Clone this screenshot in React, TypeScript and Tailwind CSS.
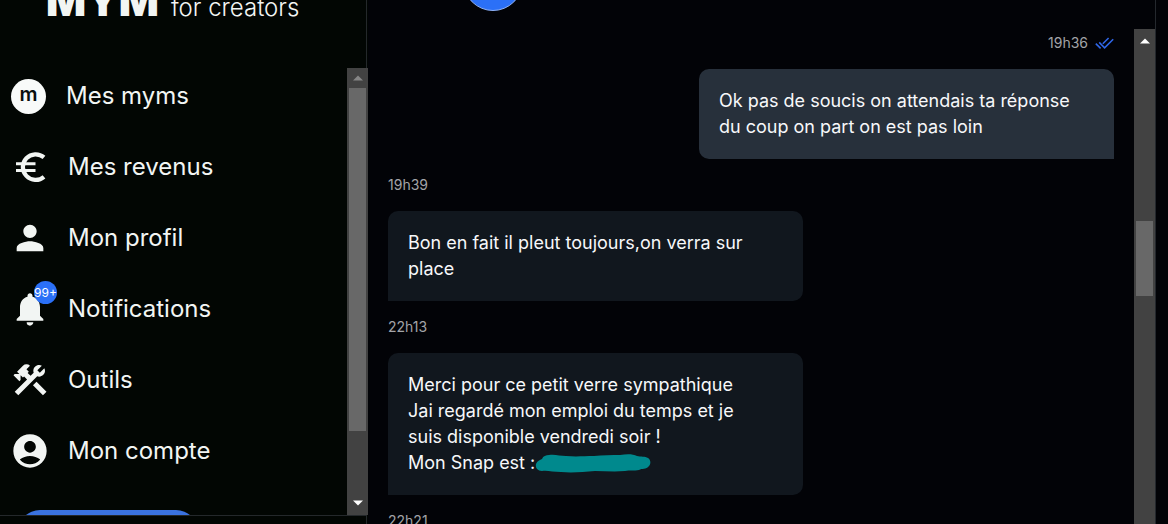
import React from 'react';
import { MdAccountCircle, MdConstruction, MdNotifications, MdPerson } from 'react-icons/md';

const EuroIcon = ({ className }: { className?: string }) => (
  <svg className={className} viewBox="0 0 40 40" fill="none" stroke="currentColor" aria-hidden="true">
    <path strokeWidth="4.2" d="M34 10.4A12.8 12.8 0 1 0 34 29.8" />
    <path strokeWidth="3" d="M6 16.8h19.5M6 23.4h19.5" />
  </svg>
);

const menu = [
  { label: 'Mes revenus', icon: EuroIcon },
  { label: 'Mon profil', icon: MdPerson },
  { label: 'Notifications', icon: MdNotifications, badge: '99+' },
  { label: 'Outils', icon: MdConstruction },
  { label: 'Mon compte', icon: MdAccountCircle },
];

type Message = {
  time: string;
  lines: string[];
  mine?: boolean;
  hidden?: boolean;
};

const messages: Message[] = [
  { time: '19h36', mine: true, lines: ['Ok pas de soucis on attendais ta réponse', 'du coup on part on est pas loin'] },
  { time: '19h39', lines: ['Bon en fait il pleut toujours,on verra sur', 'place'] },
  {
    time: '22h13',
    hidden: true,
    lines: ['Merci pour ce petit verre sympathique', 'Jai regardé mon emploi du temps et je', 'suis disponible vendredi soir !', 'Mon Snap est :'],
  },
];

const Arrow = ({ down }: { down?: boolean }) => (
  <svg width="10" height="6" viewBox="0 0 10 6" fill="currentColor" aria-hidden="true">
    <path d={down ? 'M0 0.5h10L5 5.5z' : 'M0 5.5h10L5 0.5z'} />
  </svg>
);

const DoubleCheck = () => (
  <svg width="19" height="13" viewBox="0 0 19 13" fill="none" stroke="#2f66e6" strokeWidth="1.6" aria-hidden="true">
    <path d="M0.8 6.6l4.8 4.8M4.2 5.4l5.4 5.4L18.2 2.2M13.6 1L7.8 6.8" />
  </svg>
);

// hand-drawn marker stroke over the private name
const Scribble = () => (
  <svg className="shrink-0" width="116" height="19" viewBox="0 0 116 19" fill="#00898d" aria-hidden="true">
    <path d="M1 10C2 7 5 6 7 5C8 2 11 1 14 1C20 0 25 2 31 2C42 3 49 2 59 2C67 1 77 1 85 1C92 0 98 0 102 2C106 3 110 2 113 4C116 6 116 10 114 12C111 16 107 14 104 16C99 17 95 16 90 17C79 18 70 17 60 17C48 18 37 19 26 18C18 18 12 16 7 17C3 17 0 14 1 10Z" />
  </svg>
);

const Bubble = ({ message }: { message: Message }) => (
  <div
    className={
      message.mine
        ? 'w-full max-w-[415px] self-end rounded-[10px] rounded-br-none bg-[#27303b] px-5 py-[19px]'
        : 'w-full max-w-[415px] rounded-[10px] rounded-bl-none bg-[#11171e] px-5 py-[19px]'
    }
  >
    {message.lines.map((line, i) => (
      <p key={line} className="flex items-center whitespace-nowrap text-lg/[26px] text-[#f7f8fa]">
        {line}
        {message.hidden && i === message.lines.length - 1 && <Scribble />}
      </p>
    ))}
  </div>
);

const Sidebar = () => (
  <aside className="flex h-full w-[368px] shrink-0 flex-col bg-[#020603] text-[#f2f5f3]">
    <header className="mr-px flex h-[68px] shrink-0 items-end border-r border-[#24282b] pb-10 pl-[46px]">
      <div className="flex items-baseline gap-3">
        <span className="text-[42px]/10 font-black">MYM</span>
        <span className="text-2xl/10 font-light">for creators</span>
      </div>
    </header>

    <div className="flex min-h-0 flex-1">
      <nav className="flex flex-1 flex-col gap-[31px] overflow-hidden pt-2 pl-[10px]">
        <a href="#myms" className="flex h-10 shrink-0 items-center gap-5 pl-px text-2xl">
          <span className="flex size-[35px] items-center justify-center rounded-full bg-[#f8faf9] pb-1 text-xl font-semibold text-[#0b0f0d]">m</span>
          Mes myms
        </a>
        {menu.map(({ label, icon: Icon, badge }) => (
          <a key={label} href={'#' + label} className="flex h-10 shrink-0 items-center gap-[18px] text-2xl">
            <span className="relative">
              <Icon className="size-10" />
              {badge && (
                <span className="absolute -top-2 left-6 flex size-[23px] items-center justify-center rounded-full bg-[#2b70f7] text-xs text-white">
                  {badge}
                </span>
              )}
            </span>
            {label}
          </a>
        ))}
        <button type="button" aria-label="Publier" className="mt-2 ml-2 h-11 w-[180px] shrink-0 rounded-full bg-[#3a72e0]" />
      </nav>

      <div className="flex w-[21px] flex-col items-stretch bg-[#424242]">
        <button type="button" aria-label="Monter" className="flex h-5 shrink-0 items-center justify-center text-[#868686]">
          <Arrow />
        </button>
        <div className="min-h-0 flex-1">
          <div className="mx-[2px] h-[85%] bg-[#686868]" />
        </div>
        <button type="button" aria-label="Descendre" className="flex h-6 shrink-0 items-center justify-center text-white">
          <Arrow down />
        </button>
      </div>
    </div>

    <div className="mr-px h-[9px] shrink-0 border-t border-r border-[#24282b]" />
  </aside>
);

const Chat = () => (
  <main className="mr-3 flex h-full min-w-0 flex-1 flex-col border-r border-[#24282d]">
    <header className="flex h-[29px] shrink-0 items-end pb-[18px] pl-[95px]">
      <div className="size-[60px] shrink-0 rounded-full border border-[#8fb1f5] bg-[#2b70f7]" />
    </header>

    <div className="flex min-h-0 flex-1">
      <section className="flex min-w-0 flex-1 flex-col gap-4 overflow-hidden pt-1 pr-5 pl-5">
        {messages.map((message) => (
          <React.Fragment key={message.time}>
            <div className={message.mine ? 'flex h-5 shrink-0 items-center gap-[7px] self-end text-sm text-[#a2a4a8]' : 'flex h-5 shrink-0 items-center text-sm text-[#a2a4a8]'}>
              <time>{message.time}</time>
              {message.mine && <DoubleCheck />}
            </div>
            <Bubble message={message} />
          </React.Fragment>
        ))}
        <time className="h-5 shrink-0 text-sm text-[#a2a4a8]">22h21</time>
      </section>

      <div className="flex w-[21px] flex-col bg-[#424242]">
        <button type="button" aria-label="Messages précédents" className="flex h-6 shrink-0 items-center justify-center text-white">
          <Arrow />
        </button>
        <div className="mx-[2px] mt-[168px] h-[75px] bg-[#686868]" />
      </div>
    </div>
  </main>
);

export default function App() {
  return (
    <div className="flex h-screen overflow-hidden bg-[#020307] font-['Inter',sans-serif]">
      <Sidebar />
      <Chat />
    </div>
  );
}
